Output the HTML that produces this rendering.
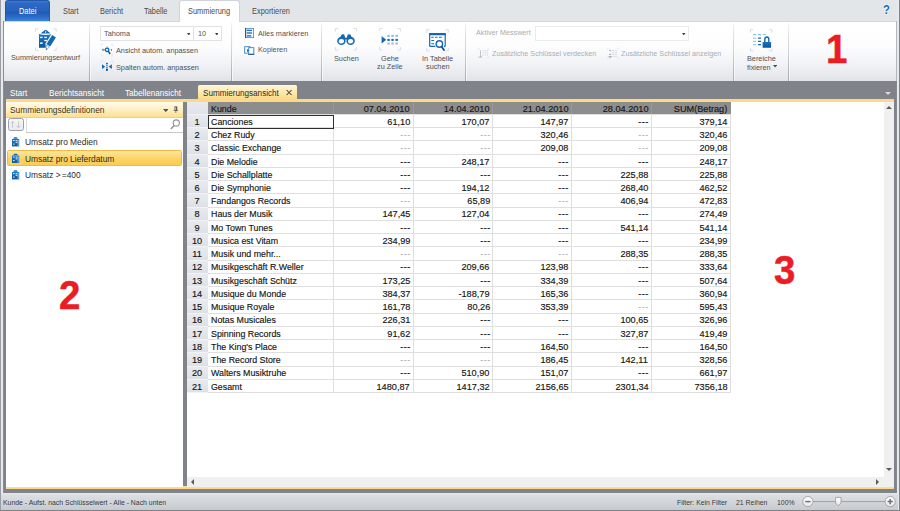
<!DOCTYPE html>
<html><head><meta charset="utf-8"><title>Summierung</title>
<style>
*{box-sizing:border-box;margin:0;padding:0}
html,body{width:900px;height:511px;overflow:hidden}
body{font-family:"Liberation Sans",sans-serif;background:#e3e6e9;position:relative;color:#222}
.a{position:absolute;white-space:nowrap}
.t{position:absolute;white-space:nowrap;line-height:1;transform-origin:0 50%}
.t.r{transform-origin:100% 50%}
#tabstrip{left:0;top:0;width:900px;height:21.5px;background:#e3e6e9}
#ribbon{left:3.5px;top:20.8px;width:893px;height:60.3px;background:linear-gradient(#ffffff 0%,#fdfdfe 42%,#f1f2f5 72%,#e7e9ed 90%,#e1e3e8 100%);border-top:1px solid #d4d7db}
.rt{font-size:8.3px;color:#4a4a4a;transform:scaleX(.893)}
.rl{font-size:8.1px;color:#505050;transform:scaleX(.902)}
.rd{font-size:8.1px;color:#a9adb3;transform:scaleX(.888)}
.sep{width:2px;top:22.6px;height:58.4px;background:linear-gradient(90deg,transparent 50%,rgba(255,255,255,.9) 50%),linear-gradient(#f3f4f5,#dfe1e4 20%,#cfd2d6 50%,#a6a9ae)}
#docstrip{left:3px;top:81.2px;width:893.5px;height:411.8px;background:#80848a}
.dt{font-size:8.9px;color:#fff;transform:scaleX(.915)}
#yl1{left:6px;top:99px;width:888px;height:3px;background:#fbd987}
#yl2{left:6px;top:486.3px;width:888px;height:2.8px;background:linear-gradient(#fde09a,#fbd885)}
#panel{left:6px;top:102px;width:176.7px;height:384.6px;background:#fff}
#phead{left:6px;top:101.7px;width:176.7px;height:15.2px;background:linear-gradient(#fffbea,#fef0c4 50%,#fde08f)}
.pn{font-size:9px;color:#2b2b2b;transform:scaleX(.93)}
#grid{left:186.8px;top:102px;width:707.2px;height:384.6px;background:#fff}
.gc{font-size:9.3px;color:#141414;transform:scaleX(.95);-webkit-text-stroke:0.15px #141414}
.gn{font-size:9.3px;color:#141414;transform:scaleX(.985);-webkit-text-stroke:0.15px #141414}
.hl{height:1px;background:#dfdfdf}
.vl{width:1px;background:#dfdfdf}
#status{left:1.2px;top:493px;width:897.3px;height:16.6px;background:linear-gradient(#e6e8eb 0%,#dcdfe2 14%,#d2d5d9 55%,#c6c9ce 100%)}
.st{font-size:7.7px;color:#3a3a3a;transform:scaleX(.896)}
</style></head><body>

<div class="a" id="tabstrip"></div>
<div class="a" id="ribbon"></div>
<div class="a" id="docstrip"></div>
<div class="a" style="left:0;top:0;width:1px;height:511px;background:#9a9da1"></div>
<div class="a" style="left:1px;top:0;width:2px;height:511px;background:#e7e9ec"></div>
<div class="a" style="left:2.8px;top:21px;width:1px;height:472px;background:#8a8e93"></div>
<div class="a" style="left:896px;top:21px;width:1px;height:60.2px;background:#b4b7bc"></div>
<div class="a" style="left:896px;top:81.2px;width:1px;height:411.8px;background:#85898e"></div>
<div class="a" style="left:897px;top:0;width:1.5px;height:511px;background:#e7e9ec"></div>
<div class="a" style="left:898.5px;top:0;width:1.5px;height:511px;background:#7f8388"></div>
<div class="a" style="left:0;top:509.6px;width:900px;height:1.4px;background:#7f8388"></div>
<div class="a" style="left:5px;top:0;width:45px;height:21px;border-radius:3px 3px 0 0;background:linear-gradient(#3b7ad2 0%,#2c69c5 12%,#2662be 48%,#2059b3 56%,#2b6dc9 80%,#3c86dc 100%);border:1px solid #2257ab;border-bottom:none"></div>
<div class="t rt" style="left:19.40px;top:6.97px;color:#fff">Datei</div>
<div class="t rt" style="left:63.10px;top:7.07px;">Start</div>
<div class="t rt" style="left:99.70px;top:7.07px;">Bericht</div>
<div class="t rt" style="left:143.80px;top:7.07px;">Tabelle</div>
<div class="a" style="left:179px;top:0px;width:61px;height:22.2px;background:#fff;border:1px solid #d0d3d7;border-bottom:none;border-radius:3px 3px 0 0"></div>
<div class="t rt" style="left:188.20px;top:7.17px;">Summierung</div>
<div class="t rt" style="left:251.60px;top:7.17px;">Exportieren</div>
<div class="t" style="left:883px;top:3.4px;font-size:13px;font-weight:bold;color:#166ab2;transform:scaleX(.86);text-shadow:0 0 1.5px #fff,0 0 2px #fff">?</div>
<div class="a sep" style="left:88.8px"></div>
<div class="a sep" style="left:231.4px"></div>
<div class="a sep" style="left:321.0px"></div>
<div class="a sep" style="left:465.2px"></div>
<div class="a sep" style="left:732.8px"></div>
<div class="a sep" style="left:788.4px"></div>
<div class="t rl" style="left:10.50px;top:54.24px;">Summierungsentwurf</div>
<div class="a" style="left:99.5px;top:26px;width:94px;height:14.5px;background:#fff;border:1px solid #e0e2e6"></div>
<div class="a" style="left:193.5px;top:26px;width:28.3px;height:14.5px;background:#fff;border:1px solid #e0e2e6;border-left:none"></div>
<div class="t rl" style="left:103.80px;top:30.14px;">Tahoma</div>
<div class="t rl" style="left:198.30px;top:30.14px;">10</div>
<svg class="a" style="left:186.7px;top:32.7px" width="3.5" height="2.4" viewBox="0 0 3.5 2.4"><path d="M0 0h3.5l-1.75 2.4z" fill="#3a3a3a"/></svg>
<svg class="a" style="left:214.5px;top:32.7px" width="3.5" height="2.4" viewBox="0 0 3.5 2.4"><path d="M0 0h3.5l-1.75 2.4z" fill="#3a3a3a"/></svg>
<div class="t rl" style="left:115.60px;top:46.84px;">Ansicht autom. anpassen</div>
<div class="t rl" style="left:115.60px;top:63.54px;">Spalten autom. anpassen</div>
<div class="t rl" style="left:258.00px;top:29.64px;">Alles markieren</div>
<div class="t rl" style="left:258.00px;top:46.44px;">Kopieren</div>
<div class="t rl" style="left:333.80px;top:54.64px;">Suchen</div>
<div class="t rl" style="left:381.40px;top:54.64px;">Gehe</div>
<div class="t rl" style="left:377.30px;top:62.74px;">zu Zeile</div>
<div class="t rl" style="left:421.80px;top:55.14px;">In Tabelle</div>
<div class="t rl" style="left:425.70px;top:63.34px;">suchen</div>
<div class="t rd" style="left:476.00px;top:29.44px;">Aktiver Messwert</div>
<div class="a" style="left:535.4px;top:26px;width:154px;height:14.5px;background:#fff;border:1px solid #e8eaed"></div>
<svg class="a" style="left:682.1px;top:32.6px" width="3.5" height="2.4" viewBox="0 0 3.5 2.4"><path d="M0 0h3.5l-1.75 2.4z" fill="#3a3a3a"/></svg>
<div class="t rd" style="left:491.80px;top:50.04px;">Zusätzliche Schlüssel verdecken</div>
<div class="t rd" style="left:621.20px;top:50.04px;">Zusätzliche Schlüssel anzeigen</div>
<div class="t rl" style="left:746.90px;top:55.04px;">Bereiche</div>
<div class="t rl" style="left:746.60px;top:63.64px;">fixieren</div>
<svg class="a" style="left:772.5px;top:65.4px" width="4.2" height="2.4" viewBox="0 0 4.2 2.4"><path d="M0 0h4.2l-2.1 2.4z" fill="#4a4a4a"/></svg>
<div class="t dt" style="left:10.30px;top:88.87px;">Start</div>
<div class="t dt" style="left:48.90px;top:88.87px;">Berichtsansicht</div>
<div class="t dt" style="left:125.20px;top:88.87px;">Tabellenansicht</div>
<div class="a" style="left:198.2px;top:85.3px;width:99px;height:14.2px;background:linear-gradient(#fff7dc,#fde7a8 60%,#fbd987);border-radius:1.5px 1.5px 0 0"></div>
<div class="t dt" style="left:203.30px;top:88.87px;color:#2a2a2a">Summierungsansicht</div>
<div class="a" style="left:885.2px;top:92.3px;width:0;height:0;border-left:3px solid transparent;border-right:3px solid transparent;border-top:3.2px solid #d9dbde"></div>
<div class="a" id="yl1"></div><div class="a" id="yl2"></div>
<div class="a" id="panel"></div><div class="a" id="phead"></div>
<div class="a" style="left:6px;top:116.8px;width:176.7px;height:0.8px;background:#cfcfcf"></div>
<div class="t pn" style="left:9.60px;top:106.38px;color:#3a3322">Summierungsdefinitionen</div>
<svg class="a" style="left:162.6px;top:109px" width="5.6" height="3.1" viewBox="0 0 5.6 3.1"><path d="M0 0h5.6l-2.8 3.1z" fill="#55554f"/></svg>
<div class="a" style="left:7.7px;top:118.4px;width:16.3px;height:12.2px;border:1px solid #9c9fa3;border-radius:2.5px;background:linear-gradient(#f6f6f6,#e9eaeb)"></div>
<div class="a" style="left:25.6px;top:131.6px;width:157.1px;height:1px;background:#c6c8ca"></div>
<div class="a" style="left:25.6px;top:117.6px;width:1px;height:14.5px;background:#dcdddf"></div>
<div class="a" style="left:7.3px;top:150px;width:175px;height:16.4px;background:linear-gradient(#fde59c,#fcd465 55%,#fbcb52);border:1px solid #ecba45;border-radius:1.5px"></div>
<div class="t pn" style="left:25.10px;top:138.48px;">Umsatz pro Medien</div>
<div class="t pn" style="left:25.10px;top:154.78px;">Umsatz pro Lieferdatum</div>
<div class="t pn" style="left:25.10px;top:171.38px;">Umsatz &gt;<span style="margin-left:1.3px">=</span>400</div>
<div class="a" id="grid"></div>
<div class="a" style="left:186.8px;top:102px;width:21.6px;height:12.5px;background:linear-gradient(#e8eaee,#dfe2e7)"></div>
<div class="a" style="left:186.8px;top:114.5px;width:21.6px;height:278.04px;background:repeating-linear-gradient(#e8eaee 0px,#e3e6ea 6px,#dcdfe5 13.24px)"></div>
<div class="a" style="left:208.0px;top:102px;width:522.7px;height:12.5px;background:#8d8d8d"></div>
<div class="a" style="left:333.2px;top:102px;width:1px;height:12.5px;background:#999999"></div>
<div class="a" style="left:412.5px;top:102px;width:1px;height:12.5px;background:#999999"></div>
<div class="a" style="left:492.3px;top:102px;width:1px;height:12.5px;background:#999999"></div>
<div class="a" style="left:570.7px;top:102px;width:1px;height:12.5px;background:#999999"></div>
<div class="a" style="left:650.6px;top:102px;width:1px;height:12.5px;background:#999999"></div>
<div class="t gc" style="left:211.20px;top:104.83px;color:#181818">Kunde</div>
<div class="t gn r" style="right:490.00px;top:104.83px;color:#181818">07.04.2010</div>
<div class="t gn r" style="right:410.20px;top:104.83px;color:#181818">14.04.2010</div>
<div class="t gn r" style="right:331.80px;top:104.83px;color:#181818">21.04.2010</div>
<div class="t gn r" style="right:251.90px;top:104.83px;color:#181818">28.04.2010</div>
<div class="t gn r" style="right:172.30px;top:104.83px;color:#181818">SUM(Betrag)</div>
<div class="a hl" style="left:208.4px;top:114.00px;width:522.3px"></div>
<div class="a hl" style="left:186.8px;top:114.00px;width:21.6px;background:#f1f2f4"></div>
<div class="a hl" style="left:208.4px;top:127.24px;width:522.3px"></div>
<div class="a hl" style="left:186.8px;top:127.24px;width:21.6px;background:#f1f2f4"></div>
<div class="a hl" style="left:208.4px;top:140.48px;width:522.3px"></div>
<div class="a hl" style="left:186.8px;top:140.48px;width:21.6px;background:#f1f2f4"></div>
<div class="a hl" style="left:208.4px;top:153.72px;width:522.3px"></div>
<div class="a hl" style="left:186.8px;top:153.72px;width:21.6px;background:#f1f2f4"></div>
<div class="a hl" style="left:208.4px;top:166.96px;width:522.3px"></div>
<div class="a hl" style="left:186.8px;top:166.96px;width:21.6px;background:#f1f2f4"></div>
<div class="a hl" style="left:208.4px;top:180.20px;width:522.3px"></div>
<div class="a hl" style="left:186.8px;top:180.20px;width:21.6px;background:#f1f2f4"></div>
<div class="a hl" style="left:208.4px;top:193.44px;width:522.3px"></div>
<div class="a hl" style="left:186.8px;top:193.44px;width:21.6px;background:#f1f2f4"></div>
<div class="a hl" style="left:208.4px;top:206.68px;width:522.3px"></div>
<div class="a hl" style="left:186.8px;top:206.68px;width:21.6px;background:#f1f2f4"></div>
<div class="a hl" style="left:208.4px;top:219.92px;width:522.3px"></div>
<div class="a hl" style="left:186.8px;top:219.92px;width:21.6px;background:#f1f2f4"></div>
<div class="a hl" style="left:208.4px;top:233.16px;width:522.3px"></div>
<div class="a hl" style="left:186.8px;top:233.16px;width:21.6px;background:#f1f2f4"></div>
<div class="a hl" style="left:208.4px;top:246.40px;width:522.3px"></div>
<div class="a hl" style="left:186.8px;top:246.40px;width:21.6px;background:#f1f2f4"></div>
<div class="a hl" style="left:208.4px;top:259.64px;width:522.3px"></div>
<div class="a hl" style="left:186.8px;top:259.64px;width:21.6px;background:#f1f2f4"></div>
<div class="a hl" style="left:208.4px;top:272.88px;width:522.3px"></div>
<div class="a hl" style="left:186.8px;top:272.88px;width:21.6px;background:#f1f2f4"></div>
<div class="a hl" style="left:208.4px;top:286.12px;width:522.3px"></div>
<div class="a hl" style="left:186.8px;top:286.12px;width:21.6px;background:#f1f2f4"></div>
<div class="a hl" style="left:208.4px;top:299.36px;width:522.3px"></div>
<div class="a hl" style="left:186.8px;top:299.36px;width:21.6px;background:#f1f2f4"></div>
<div class="a hl" style="left:208.4px;top:312.60px;width:522.3px"></div>
<div class="a hl" style="left:186.8px;top:312.60px;width:21.6px;background:#f1f2f4"></div>
<div class="a hl" style="left:208.4px;top:325.84px;width:522.3px"></div>
<div class="a hl" style="left:186.8px;top:325.84px;width:21.6px;background:#f1f2f4"></div>
<div class="a hl" style="left:208.4px;top:339.08px;width:522.3px"></div>
<div class="a hl" style="left:186.8px;top:339.08px;width:21.6px;background:#f1f2f4"></div>
<div class="a hl" style="left:208.4px;top:352.32px;width:522.3px"></div>
<div class="a hl" style="left:186.8px;top:352.32px;width:21.6px;background:#f1f2f4"></div>
<div class="a hl" style="left:208.4px;top:365.56px;width:522.3px"></div>
<div class="a hl" style="left:186.8px;top:365.56px;width:21.6px;background:#f1f2f4"></div>
<div class="a hl" style="left:208.4px;top:378.80px;width:522.3px"></div>
<div class="a hl" style="left:186.8px;top:378.80px;width:21.6px;background:#f1f2f4"></div>
<div class="a hl" style="left:208.4px;top:392.04px;width:522.3px"></div>
<div class="a hl" style="left:186.8px;top:392.04px;width:21.6px;background:#f1f2f4"></div>
<div class="a vl" style="left:333.2px;top:114.5px;height:278.04px"></div>
<div class="a vl" style="left:412.5px;top:114.5px;height:278.04px"></div>
<div class="a vl" style="left:492.3px;top:114.5px;height:278.04px"></div>
<div class="a vl" style="left:570.7px;top:114.5px;height:278.04px"></div>
<div class="a vl" style="left:650.6px;top:114.5px;height:278.04px"></div>
<div class="a vl" style="left:730.2px;top:114.5px;height:278.04px"></div>
<div class="t gn" style="left:187.4px;width:20px;text-align:center;transform-origin:50% 50%;top:117.78px">1</div>
<div class="t gc" style="left:211.00px;top:117.78px;">Canciones</div>
<div class="t gn r" style="right:490.00px;top:117.78px;">61,10</div>
<div class="t gn r" style="right:410.20px;top:117.78px;">170,07</div>
<div class="t gn r" style="right:331.80px;top:117.78px;">147,97</div>
<div class="t gn r" style="right:251.90px;top:117.78px;letter-spacing:.5px;margin-right:-.5px;">---</div>
<div class="t gn r" style="right:172.30px;top:117.78px;">379,14</div>
<div class="t gn" style="left:187.4px;width:20px;text-align:center;transform-origin:50% 50%;top:131.02px">2</div>
<div class="t gc" style="left:211.00px;top:131.02px;">Chez Rudy</div>
<div class="t gn r" style="right:490.00px;top:131.02px;letter-spacing:.5px;margin-right:-.5px;color:#a4a4a4;-webkit-text-stroke:0">---</div>
<div class="t gn r" style="right:410.20px;top:131.02px;letter-spacing:.5px;margin-right:-.5px;color:#a4a4a4;-webkit-text-stroke:0">---</div>
<div class="t gn r" style="right:331.80px;top:131.02px;">320,46</div>
<div class="t gn r" style="right:251.90px;top:131.02px;letter-spacing:.5px;margin-right:-.5px;color:#a4a4a4;-webkit-text-stroke:0">---</div>
<div class="t gn r" style="right:172.30px;top:131.02px;">320,46</div>
<div class="t gn" style="left:187.4px;width:20px;text-align:center;transform-origin:50% 50%;top:144.26px">3</div>
<div class="t gc" style="left:211.00px;top:144.26px;">Classic Exchange</div>
<div class="t gn r" style="right:490.00px;top:144.26px;letter-spacing:.5px;margin-right:-.5px;color:#a4a4a4;-webkit-text-stroke:0">---</div>
<div class="t gn r" style="right:410.20px;top:144.26px;letter-spacing:.5px;margin-right:-.5px;color:#a4a4a4;-webkit-text-stroke:0">---</div>
<div class="t gn r" style="right:331.80px;top:144.26px;">209,08</div>
<div class="t gn r" style="right:251.90px;top:144.26px;letter-spacing:.5px;margin-right:-.5px;color:#a4a4a4;-webkit-text-stroke:0">---</div>
<div class="t gn r" style="right:172.30px;top:144.26px;">209,08</div>
<div class="t gn" style="left:187.4px;width:20px;text-align:center;transform-origin:50% 50%;top:157.50px">4</div>
<div class="t gc" style="left:211.00px;top:157.50px;">Die Melodie</div>
<div class="t gn r" style="right:490.00px;top:157.50px;letter-spacing:.5px;margin-right:-.5px;">---</div>
<div class="t gn r" style="right:410.20px;top:157.50px;">248,17</div>
<div class="t gn r" style="right:331.80px;top:157.50px;letter-spacing:.5px;margin-right:-.5px;">---</div>
<div class="t gn r" style="right:251.90px;top:157.50px;letter-spacing:.5px;margin-right:-.5px;">---</div>
<div class="t gn r" style="right:172.30px;top:157.50px;">248,17</div>
<div class="t gn" style="left:187.4px;width:20px;text-align:center;transform-origin:50% 50%;top:170.74px">5</div>
<div class="t gc" style="left:211.00px;top:170.74px;">Die Schallplatte</div>
<div class="t gn r" style="right:490.00px;top:170.74px;letter-spacing:.5px;margin-right:-.5px;">---</div>
<div class="t gn r" style="right:410.20px;top:170.74px;letter-spacing:.5px;margin-right:-.5px;">---</div>
<div class="t gn r" style="right:331.80px;top:170.74px;letter-spacing:.5px;margin-right:-.5px;">---</div>
<div class="t gn r" style="right:251.90px;top:170.74px;">225,88</div>
<div class="t gn r" style="right:172.30px;top:170.74px;">225,88</div>
<div class="t gn" style="left:187.4px;width:20px;text-align:center;transform-origin:50% 50%;top:183.98px">6</div>
<div class="t gc" style="left:211.00px;top:183.98px;">Die Symphonie</div>
<div class="t gn r" style="right:490.00px;top:183.98px;letter-spacing:.5px;margin-right:-.5px;">---</div>
<div class="t gn r" style="right:410.20px;top:183.98px;">194,12</div>
<div class="t gn r" style="right:331.80px;top:183.98px;letter-spacing:.5px;margin-right:-.5px;">---</div>
<div class="t gn r" style="right:251.90px;top:183.98px;">268,40</div>
<div class="t gn r" style="right:172.30px;top:183.98px;">462,52</div>
<div class="t gn" style="left:187.4px;width:20px;text-align:center;transform-origin:50% 50%;top:197.22px">7</div>
<div class="t gc" style="left:211.00px;top:197.22px;">Fandangos Records</div>
<div class="t gn r" style="right:490.00px;top:197.22px;letter-spacing:.5px;margin-right:-.5px;color:#a4a4a4;-webkit-text-stroke:0">---</div>
<div class="t gn r" style="right:410.20px;top:197.22px;">65,89</div>
<div class="t gn r" style="right:331.80px;top:197.22px;letter-spacing:.5px;margin-right:-.5px;color:#a4a4a4;-webkit-text-stroke:0">---</div>
<div class="t gn r" style="right:251.90px;top:197.22px;">406,94</div>
<div class="t gn r" style="right:172.30px;top:197.22px;">472,83</div>
<div class="t gn" style="left:187.4px;width:20px;text-align:center;transform-origin:50% 50%;top:210.46px">8</div>
<div class="t gc" style="left:211.00px;top:210.46px;">Haus der Musik</div>
<div class="t gn r" style="right:490.00px;top:210.46px;">147,45</div>
<div class="t gn r" style="right:410.20px;top:210.46px;">127,04</div>
<div class="t gn r" style="right:331.80px;top:210.46px;letter-spacing:.5px;margin-right:-.5px;">---</div>
<div class="t gn r" style="right:251.90px;top:210.46px;letter-spacing:.5px;margin-right:-.5px;">---</div>
<div class="t gn r" style="right:172.30px;top:210.46px;">274,49</div>
<div class="t gn" style="left:187.4px;width:20px;text-align:center;transform-origin:50% 50%;top:223.70px">9</div>
<div class="t gc" style="left:211.00px;top:223.70px;">Mo Town Tunes</div>
<div class="t gn r" style="right:490.00px;top:223.70px;letter-spacing:.5px;margin-right:-.5px;">---</div>
<div class="t gn r" style="right:410.20px;top:223.70px;letter-spacing:.5px;margin-right:-.5px;">---</div>
<div class="t gn r" style="right:331.80px;top:223.70px;letter-spacing:.5px;margin-right:-.5px;">---</div>
<div class="t gn r" style="right:251.90px;top:223.70px;">541,14</div>
<div class="t gn r" style="right:172.30px;top:223.70px;">541,14</div>
<div class="t gn" style="left:187.4px;width:20px;text-align:center;transform-origin:50% 50%;top:236.94px">10</div>
<div class="t gc" style="left:211.00px;top:236.94px;">Musica est Vitam</div>
<div class="t gn r" style="right:490.00px;top:236.94px;">234,99</div>
<div class="t gn r" style="right:410.20px;top:236.94px;letter-spacing:.5px;margin-right:-.5px;">---</div>
<div class="t gn r" style="right:331.80px;top:236.94px;letter-spacing:.5px;margin-right:-.5px;">---</div>
<div class="t gn r" style="right:251.90px;top:236.94px;letter-spacing:.5px;margin-right:-.5px;">---</div>
<div class="t gn r" style="right:172.30px;top:236.94px;">234,99</div>
<div class="t gn" style="left:187.4px;width:20px;text-align:center;transform-origin:50% 50%;top:250.18px">11</div>
<div class="t gc" style="left:211.00px;top:250.18px;">Musik und mehr...</div>
<div class="t gn r" style="right:490.00px;top:250.18px;letter-spacing:.5px;margin-right:-.5px;color:#a4a4a4;-webkit-text-stroke:0">---</div>
<div class="t gn r" style="right:410.20px;top:250.18px;letter-spacing:.5px;margin-right:-.5px;color:#a4a4a4;-webkit-text-stroke:0">---</div>
<div class="t gn r" style="right:331.80px;top:250.18px;letter-spacing:.5px;margin-right:-.5px;color:#a4a4a4;-webkit-text-stroke:0">---</div>
<div class="t gn r" style="right:251.90px;top:250.18px;">288,35</div>
<div class="t gn r" style="right:172.30px;top:250.18px;">288,35</div>
<div class="t gn" style="left:187.4px;width:20px;text-align:center;transform-origin:50% 50%;top:263.42px">12</div>
<div class="t gc" style="left:211.00px;top:263.42px;">Musikgeschäft R.Weller</div>
<div class="t gn r" style="right:490.00px;top:263.42px;letter-spacing:.5px;margin-right:-.5px;">---</div>
<div class="t gn r" style="right:410.20px;top:263.42px;">209,66</div>
<div class="t gn r" style="right:331.80px;top:263.42px;">123,98</div>
<div class="t gn r" style="right:251.90px;top:263.42px;letter-spacing:.5px;margin-right:-.5px;">---</div>
<div class="t gn r" style="right:172.30px;top:263.42px;">333,64</div>
<div class="t gn" style="left:187.4px;width:20px;text-align:center;transform-origin:50% 50%;top:276.66px">13</div>
<div class="t gc" style="left:211.00px;top:276.66px;">Musikgeschäft Schütz</div>
<div class="t gn r" style="right:490.00px;top:276.66px;">173,25</div>
<div class="t gn r" style="right:410.20px;top:276.66px;letter-spacing:.5px;margin-right:-.5px;">---</div>
<div class="t gn r" style="right:331.80px;top:276.66px;">334,39</div>
<div class="t gn r" style="right:251.90px;top:276.66px;letter-spacing:.5px;margin-right:-.5px;">---</div>
<div class="t gn r" style="right:172.30px;top:276.66px;">507,64</div>
<div class="t gn" style="left:187.4px;width:20px;text-align:center;transform-origin:50% 50%;top:289.90px">14</div>
<div class="t gc" style="left:211.00px;top:289.90px;">Musique du Monde</div>
<div class="t gn r" style="right:490.00px;top:289.90px;">384,37</div>
<div class="t gn r" style="right:410.20px;top:289.90px;">-188,79</div>
<div class="t gn r" style="right:331.80px;top:289.90px;">165,36</div>
<div class="t gn r" style="right:251.90px;top:289.90px;letter-spacing:.5px;margin-right:-.5px;">---</div>
<div class="t gn r" style="right:172.30px;top:289.90px;">360,94</div>
<div class="t gn" style="left:187.4px;width:20px;text-align:center;transform-origin:50% 50%;top:303.14px">15</div>
<div class="t gc" style="left:211.00px;top:303.14px;">Musique Royale</div>
<div class="t gn r" style="right:490.00px;top:303.14px;">161,78</div>
<div class="t gn r" style="right:410.20px;top:303.14px;">80,26</div>
<div class="t gn r" style="right:331.80px;top:303.14px;">353,39</div>
<div class="t gn r" style="right:251.90px;top:303.14px;letter-spacing:.5px;margin-right:-.5px;color:#a4a4a4;-webkit-text-stroke:0">---</div>
<div class="t gn r" style="right:172.30px;top:303.14px;">595,43</div>
<div class="t gn" style="left:187.4px;width:20px;text-align:center;transform-origin:50% 50%;top:316.38px">16</div>
<div class="t gc" style="left:211.00px;top:316.38px;">Notas Musicales</div>
<div class="t gn r" style="right:490.00px;top:316.38px;">226,31</div>
<div class="t gn r" style="right:410.20px;top:316.38px;letter-spacing:.5px;margin-right:-.5px;">---</div>
<div class="t gn r" style="right:331.80px;top:316.38px;letter-spacing:.5px;margin-right:-.5px;">---</div>
<div class="t gn r" style="right:251.90px;top:316.38px;">100,65</div>
<div class="t gn r" style="right:172.30px;top:316.38px;">326,96</div>
<div class="t gn" style="left:187.4px;width:20px;text-align:center;transform-origin:50% 50%;top:329.62px">17</div>
<div class="t gc" style="left:211.00px;top:329.62px;">Spinning Records</div>
<div class="t gn r" style="right:490.00px;top:329.62px;">91,62</div>
<div class="t gn r" style="right:410.20px;top:329.62px;letter-spacing:.5px;margin-right:-.5px;">---</div>
<div class="t gn r" style="right:331.80px;top:329.62px;letter-spacing:.5px;margin-right:-.5px;">---</div>
<div class="t gn r" style="right:251.90px;top:329.62px;">327,87</div>
<div class="t gn r" style="right:172.30px;top:329.62px;">419,49</div>
<div class="t gn" style="left:187.4px;width:20px;text-align:center;transform-origin:50% 50%;top:342.86px">18</div>
<div class="t gc" style="left:211.00px;top:342.86px;">The King's Place</div>
<div class="t gn r" style="right:490.00px;top:342.86px;letter-spacing:.5px;margin-right:-.5px;">---</div>
<div class="t gn r" style="right:410.20px;top:342.86px;letter-spacing:.5px;margin-right:-.5px;">---</div>
<div class="t gn r" style="right:331.80px;top:342.86px;">164,50</div>
<div class="t gn r" style="right:251.90px;top:342.86px;letter-spacing:.5px;margin-right:-.5px;">---</div>
<div class="t gn r" style="right:172.30px;top:342.86px;">164,50</div>
<div class="t gn" style="left:187.4px;width:20px;text-align:center;transform-origin:50% 50%;top:356.10px">19</div>
<div class="t gc" style="left:211.00px;top:356.10px;">The Record Store</div>
<div class="t gn r" style="right:490.00px;top:356.10px;letter-spacing:.5px;margin-right:-.5px;color:#a4a4a4;-webkit-text-stroke:0">---</div>
<div class="t gn r" style="right:410.20px;top:356.10px;letter-spacing:.5px;margin-right:-.5px;color:#a4a4a4;-webkit-text-stroke:0">---</div>
<div class="t gn r" style="right:331.80px;top:356.10px;">186,45</div>
<div class="t gn r" style="right:251.90px;top:356.10px;">142,11</div>
<div class="t gn r" style="right:172.30px;top:356.10px;">328,56</div>
<div class="t gn" style="left:187.4px;width:20px;text-align:center;transform-origin:50% 50%;top:369.34px">20</div>
<div class="t gc" style="left:211.00px;top:369.34px;">Walters Musiktruhe</div>
<div class="t gn r" style="right:490.00px;top:369.34px;letter-spacing:.5px;margin-right:-.5px;">---</div>
<div class="t gn r" style="right:410.20px;top:369.34px;">510,90</div>
<div class="t gn r" style="right:331.80px;top:369.34px;">151,07</div>
<div class="t gn r" style="right:251.90px;top:369.34px;letter-spacing:.5px;margin-right:-.5px;">---</div>
<div class="t gn r" style="right:172.30px;top:369.34px;">661,97</div>
<div class="t gn" style="left:187.4px;width:20px;text-align:center;transform-origin:50% 50%;top:382.58px">21</div>
<div class="t gc" style="left:211.00px;top:382.58px;">Gesamt</div>
<div class="t gn r" style="right:490.00px;top:382.58px;">1480,87</div>
<div class="t gn r" style="right:410.20px;top:382.58px;">1417,32</div>
<div class="t gn r" style="right:331.80px;top:382.58px;">2156,65</div>
<div class="t gn r" style="right:251.90px;top:382.58px;">2301,34</div>
<div class="t gn r" style="right:172.30px;top:382.58px;">7356,18</div>
<div class="a" style="left:207.8px;top:114.8px;width:126.3px;height:13.84px;border:1px solid #2e2e2e"></div>
<div class="a" style="left:884.4px;top:102px;width:9.6px;height:375px;background:#f0f0f0"></div>
<div class="a" style="left:186.8px;top:477px;width:707.2px;height:9.5px;background:#f0f0f0"></div>
<div class="a" style="left:885.9px;top:106.2px;width:0;height:0;border-left:3px solid transparent;border-right:3px solid transparent;border-bottom:3.2px solid #5a5a5a"></div>
<div class="a" style="left:885.9px;top:468.4px;width:0;height:0;border-left:3px solid transparent;border-right:3px solid transparent;border-top:3.2px solid #5a5a5a"></div>
<div class="a" style="left:191.3px;top:478.8px;width:0;height:0;border-top:3px solid transparent;border-bottom:3px solid transparent;border-right:3.2px solid #5a5a5a"></div>
<div class="a" style="left:876.2px;top:478.6px;width:0;height:0;border-top:3px solid transparent;border-bottom:3px solid transparent;border-left:3.2px solid #5a5a5a"></div>
<div class="a" id="status"></div>
<div class="t st" style="left:3.20px;top:499.28px;">Kunde - Aufst. nach Schlüsselwert - Alle - Nach unten</div>
<div class="t st" style="left:676.60px;top:499.28px;">Filter: Kein Filter</div>
<div class="t st" style="left:736.10px;top:499.28px;">21 Reihen</div>
<div class="t st" style="left:777.00px;top:499.28px;">100%</div>
<svg class="a" style="left:795px;top:493px" width="104" height="17" viewBox="795 493 104 17"><defs><linearGradient id="zb" x1="0" y1="0" x2="0" y2="1"><stop offset="0" stop-color="#ffffff"/><stop offset="1" stop-color="#e4e6e9"/></linearGradient></defs><path d="M813 501.6H885" stroke="#9da1a6" stroke-width="1"/><circle cx="807.9" cy="501.6" r="5.1" fill="url(#zb)" stroke="#a3a7ac" stroke-width="1"/><circle cx="890.2" cy="501.6" r="5.1" fill="url(#zb)" stroke="#a3a7ac" stroke-width="1"/><path d="M805.3 501.6h5.2" stroke="#6e7175" stroke-width="1.5"/><path d="M887.6 501.6h5.2M890.2 499v5.2" stroke="#6e7175" stroke-width="1.5"/><path d="M835.6 497.4h5.4v5.6l-2.7 2.9l-2.7-2.9z" fill="url(#zb)" stroke="#9da1a6" stroke-width="0.9" stroke-linejoin="round"/></svg>
<div class="t" style="left:826.3px;top:28.5px;font-size:40px;font-weight:bold;color:#ec1c24;-webkit-text-stroke:0.5px #ec1c24;transform:scaleX(.96)">1</div>
<div class="t" style="left:58.8px;top:274.7px;font-size:40px;font-weight:bold;color:#ec1c24;-webkit-text-stroke:0.5px #ec1c24;transform:scaleX(.96)">2</div>
<div class="t" style="left:773.6px;top:249.7px;font-size:40px;font-weight:bold;color:#ec1c24;-webkit-text-stroke:0.5px #ec1c24;transform:scaleX(.96)">3</div>
<svg class="a" style="left:0;top:0" width="900" height="511" viewBox="0 0 900 511">
<defs><linearGradient id="gb" x1="0" y1="0" x2="0" y2="1"><stop offset="0" stop-color="#1b78c4"/><stop offset="1" stop-color="#0b5596"/></linearGradient></defs>
<path d="M41.2 33.5q0.3-1.6 2-1.9q0.4-1.5 2.4-1.5q2 0 2.4 1.5q1.7 0.3 2 1.9z" fill="#1368b3"/>
<circle cx="45.6" cy="32" r="0.7" fill="#fff"/>
<path d="M39 34.1q6.5 1.7 13.1 0v13.7h-13.1z" fill="url(#gb)"/>
<rect x="40.2" y="36.7" width="2.3" height="1.4" fill="#fff"/>
<rect x="44.3" y="36.7" width="2.6" height="1.4" fill="#fff"/>
<rect x="44.3" y="39.8" width="2.6" height="1.4" fill="#fff"/>
<rect x="40.2" y="42.4" width="2.4" height="1.6" fill="#fff"/>
<path d="M51.7 33.4L57.2 37L57.2 52L45.9 52L45.5 43.5z" fill="#fff"/>
<path d="M52.2 35.1L55.9 37.6L50.1 46.4L46.5 44z" fill="#1368b3"/>
<path d="M46.3 44.9L49.4 47L46.2 49.9z" fill="#fff" stroke="#1368b3" stroke-width="0.5"/>
<path d="M46.25 48.3L47.4 49L46.2 50z" fill="#0b4f8c"/>
<path d="M35.5 31.799999999999997V28.9H38.4M53.300000000000004 28.9H56.2V31.799999999999997M56.2 47.4V50.3H53.300000000000004M38.4 50.3H35.5V47.4" fill="none" stroke="#cfdaeb" stroke-width="0.9"/>
<path d="M101.2 46.400000000000006V44.2H103.4M110.6 44.2H112.8V46.400000000000006M112.8 53.599999999999994V55.8H110.6M103.4 55.8H101.2V53.599999999999994" fill="none" stroke="#dbe3f0" stroke-width="0.7"/>
<circle cx="107.1" cy="49.8" r="1.75" fill="#fff" stroke="#1368b3" stroke-width="1.35"/>
<path d="M108.6 51.6L109.9 53.5" stroke="#0b5596" stroke-width="1.5" stroke-linecap="round"/>
<path d="M103.5 48.5v2.7l-1.7-1.35z" fill="#1368b3"/><rect x="103.8" y="49.2" width="0.8" height="1.2" fill="#1368b3"/>
<rect x="109.6" y="49.3" width="0.6" height="1.1" fill="#7fb3df"/><rect x="111" y="48.9" width="1" height="1.9" rx="0.4" fill="#2a7cc3"/>
<path d="M107.1 47.4v-0.7" stroke="#1368b3" stroke-width="1.1"/>
<path d="M101.2 63.0V60.8H103.4M110.6 60.8H112.8V63.0M112.8 70.0V72.2H110.6M103.4 72.2H101.2V70.0" fill="none" stroke="#dbe3f0" stroke-width="0.7"/>
<path d="M102 64.3l3.2 2.4l-3.2 2.4z" fill="#1368b3"/><path d="M111.9 64.3l-3.2 2.4l3.2 2.4z" fill="#1368b3"/>
<rect x="106" y="62.8" width="1.8" height="1.5" fill="#1368b3"/><rect x="106" y="64.9" width="1.8" height="1.4" fill="#4f97d3"/><rect x="106" y="66.9" width="1.8" height="1.4" fill="#4f97d3"/><rect x="106" y="68.8" width="1.8" height="2" fill="#0a3e70"/>
<rect x="245.5" y="28.4" width="8.1" height="9.2" fill="#fff" stroke="#3f8bcd" stroke-width="0.8"/>
<rect x="245" y="28" width="1.2" height="10" fill="#0f5fa8"/>
<rect x="246.8" y="29.7" width="5.3" height="1.4" fill="#1f72b8"/>
<rect x="246.8" y="32.3" width="5.3" height="1.4" fill="#1f72b8"/>
<rect x="246.8" y="35.2" width="5.3" height="1.4" fill="#1f72b8"/>
<rect x="251" y="35.2" width="1.1" height="1.4" fill="#fff"/>
<rect x="244.7" y="46.7" width="5.3" height="6.4" fill="#fff" stroke="#2f7fc4" stroke-width="0.9"/>
<rect x="248.7" y="47.7" width="5.1" height="6.5" fill="#fff" stroke="#2f7fc4" stroke-width="0.9"/>
<path d="M247 49l2.3 1.5l-2.3 1.5z" fill="#1368b3"/>
<path d="M248.3 54.4h5.9" stroke="#0a3e70" stroke-width="0.8"/>
<path d="M335.4 31.4V28.5H338.29999999999995M353.5 28.5H356.4V31.4M356.4 47.1V50.0H353.5M338.29999999999995 50.0H335.4V47.1" fill="none" stroke="#cfdaeb" stroke-width="0.9"/>
<path d="M341.6 34.4q1.3-0.5 2.6 0l1.1 3.4h1.4l1.1-3.4q1.3-0.5 2.6 0l2.3 5.2h-13.4z" fill="#1368b3"/>
<circle cx="341.4" cy="40.9" r="4.2" fill="#1368b3"/><circle cx="350.6" cy="40.9" r="4.2" fill="#1368b3"/>
<ellipse cx="341.4" cy="41.2" rx="2.6" ry="2.3" fill="#fff"/><ellipse cx="350.6" cy="41.2" rx="2.6" ry="2.3" fill="#fff"/>
<path d="M379.7 31.4V28.5H382.59999999999997M397.5 28.5H400.4V31.4M400.4 47.1V50.0H397.5M382.59999999999997 50.0H379.7V47.1" fill="none" stroke="#cfdaeb" stroke-width="0.9"/>
<path d="M381.6 36l4.6 3.7l-4.6 3.7z" fill="url(#gb)"/>
<rect x="387.3" y="34.8" width="2.5" height="2.1" fill="#8cc0e8"/>
<rect x="391.3" y="34.8" width="2.5" height="2.1" fill="#8cc0e8"/>
<rect x="395.4" y="34.8" width="2.5" height="2.1" fill="#8cc0e8"/>
<rect x="387.3" y="38.9" width="2.5" height="2.0" fill="#0f6cbd"/>
<rect x="391.3" y="38.9" width="2.5" height="2.0" fill="#0f6cbd"/>
<rect x="395.4" y="38.9" width="2.5" height="2.0" fill="#0f6cbd"/>
<rect x="387.3" y="42.5" width="2.5" height="2.1" fill="#b3bcc5"/>
<rect x="391.3" y="42.5" width="2.5" height="2.1" fill="#b3bcc5"/>
<rect x="395.4" y="42.5" width="2.5" height="2.1" fill="#b3bcc5"/>
<path d="M426.7 32.7V29.8H429.59999999999997M445.40000000000003 29.8H448.3V32.7M448.3 47.9V50.8H445.40000000000003M429.59999999999997 50.8H426.7V47.9" fill="none" stroke="#cfdaeb" stroke-width="0.9"/>
<rect x="429.7" y="33.7" width="15.5" height="12.6" rx="0.6" fill="#fff" stroke="#1368b3" stroke-width="1.2"/>
<rect x="429.1" y="33.1" width="16.7" height="2.2" rx="0.6" fill="#1368b3"/>
<rect x="431.2" y="36.7" width="2.6" height="1.1" rx="0.5" fill="#1368b3"/>
<rect x="435" y="36.7" width="2.6" height="1.1" rx="0.5" fill="#1368b3"/>
<rect x="438.9" y="36.7" width="3" height="1.1" rx="0.5" fill="#1368b3"/>
<rect x="431.2" y="40" width="3" height="1.1" rx="0.5" fill="#1368b3"/>
<rect x="431.2" y="43.2" width="3" height="1.1" rx="0.5" fill="#1368b3"/>
<circle cx="439.4" cy="44" r="4.9" fill="#fff"/><path d="M441.8 46.8L444.3 50.3" stroke="#fff" stroke-width="3.6" stroke-linecap="round"/>
<circle cx="439.4" cy="44" r="3.2" fill="#fff" stroke="#1368b3" stroke-width="1.4"/>
<path d="M441.7 46.8L444 50" stroke="#0b5596" stroke-width="1.9" stroke-linecap="round"/>
<path d="M478.2 50.0V48.2H480.0M486.9 48.2H488.7V50.0M488.7 56.0V57.8H486.9M480.0 57.8H478.2V56.0" fill="none" stroke="#e0e3e7" stroke-width="0.6"/>
<path d="M480.5 50.4v5.4" stroke="#b9bcc1" stroke-width="0.9"/><path d="M478.6 57.6h3.9l-1.95-2z" fill="#b3b6bb"/>
<path d="M482.6 50.6h1.7M485 50.6h1.5M487 50.6h1.2" stroke="#d3d6da" stroke-width="0.9"/>
<path d="M482.6 52.8h1.7M485 52.8h1.5M487 52.8h1.2" stroke="#d3d6da" stroke-width="0.9"/>
<path d="M482.6 55h1.7M485 55h1.5M487 55h1.2" stroke="#d3d6da" stroke-width="0.9"/>
<path d="M607.3 50.0V48.2H609.0999999999999M616.9000000000001 48.2H618.7V50.0M618.7 56.7V58.5H616.9000000000001M609.0999999999999 58.5H607.3V56.7" fill="none" stroke="#e0e3e7" stroke-width="0.6"/>
<rect x="609" y="49.9" width="2.2" height="1.2" fill="#b3b6bb"/><rect x="609" y="53.8" width="2.2" height="1.2" fill="#b3b6bb"/>
<path d="M608 56.1h4.2l-2.1 2.3z" fill="#b3b6bb"/>
<path d="M612.3 50.5h2M615.2 50.5h1.8" stroke="#d3d6da" stroke-width="0.9"/>
<path d="M612.3 52.5h2M615.2 52.5h1.8" stroke="#d3d6da" stroke-width="0.9"/>
<path d="M612.3 54.4h2M615.2 54.4h1.8" stroke="#d3d6da" stroke-width="0.9"/>
<path d="M612.3 56.4h2M615.2 56.4h1.8" stroke="#d3d6da" stroke-width="0.9"/>
<path d="M750.4 32.6V29.7H753.3M769.1 29.7H772.0V32.6M772.0 47.9V50.8H769.1M753.3 50.8H750.4V47.9" fill="none" stroke="#cfdaeb" stroke-width="0.9"/>
<rect x="753" y="34.1" width="3.2" height="1.2" rx="0.5" fill="#8cc0e8"/>
<rect x="757.9" y="34.1" width="3.2" height="1.2" rx="0.5" fill="#8cc0e8"/>
<rect x="762.8" y="34.1" width="3.2" height="1.2" rx="0.5" fill="#8cc0e8"/>
<rect x="753" y="37.4" width="3.2" height="1.3" rx="0.5" fill="#9cc8ea"/>
<rect x="757.9" y="37.4" width="3.2" height="1.3" rx="0.5" fill="#0f6cbd"/>
<rect x="753" y="40.7" width="3.2" height="1.3" rx="0.5" fill="#9cc8ea"/>
<rect x="757.9" y="40.7" width="3.2" height="1.3" rx="0.5" fill="#0f6cbd"/>
<rect x="753" y="44" width="3.2" height="1.3" rx="0.5" fill="#9cc8ea"/>
<rect x="757.9" y="44" width="3.2" height="1.3" rx="0.5" fill="#0f6cbd"/>
<rect x="761.8" y="35" width="10.2" height="13.6" fill="#fff"/>
<path d="M764.8 42.3v-2.9a2 2.4 0 0 1 4 0v2.9" fill="#fff" stroke="#1368b3" stroke-width="1.4"/>
<rect x="762.6" y="41.9" width="8.5" height="5.9" rx="0.6" fill="url(#gb)"/>
<path d="M174.4 106.8h2.9M174.9 106.8v3.6M176.8 106.8v3.6M173.6 110.5h4.4M175.8 110.5v2.4" stroke="#5b5b55" stroke-width="0.8" fill="none"/>
<path d="M176.4 107v3.4" stroke="#5b5b55" stroke-width="1.1"/>
<circle cx="176.3" cy="123" r="3.1" fill="none" stroke="#949494" stroke-width="1.1"/><path d="M174.1 125.4L170.9 128.9" stroke="#949494" stroke-width="1.5"/>
<path d="M12.6 127.6v-6.2M10.8 123.2l1.8-1.9l1.8 1.9M18.6 121.4v6.2M16.8 125.8l1.8 1.9l1.8-1.9" stroke="#c3c6c9" stroke-width="0.95" fill="none"/>
<path d="M286.6 90l5 5M291.6 90l-5 5" stroke="#3c3c3c" stroke-width="1.05"/>
<path d="M10.3 137.8V136.0H12.100000000000001M19.099999999999998 136.0H20.9V137.8M20.9 145.59999999999997V147.39999999999998H19.099999999999998M12.100000000000001 147.39999999999998H10.3V145.59999999999997" fill="none" stroke="#dfe6f1" stroke-width="0.6"/>
<path d="M13.5 138.79999999999998v-0.5q0-1.1 1.1-1.1h1.8q1.1 0 1.1 1.1v0.5z" fill="#1368b3"/>
<rect x="12" y="139.0" width="7.2" height="7.4" fill="url(#gb)"/>
<path d="M13 140.6h1.6M15.6 140.6h1.7M15.6 142.39999999999998h1.7M13 144.1h1.6" stroke="#fff" stroke-width="0.9"/>
<path d="M18.1 139.79999999999998v6.3" stroke="#cfe3f5" stroke-width="0.7"/>
<path d="M10.3 154.3V152.5H12.100000000000001M19.099999999999998 152.5H20.9V154.3M20.9 162.09999999999997V163.89999999999998H19.099999999999998M12.100000000000001 163.89999999999998H10.3V162.09999999999997" fill="none" stroke="#dfe6f1" stroke-width="0.6"/>
<path d="M13.5 155.29999999999998v-0.5q0-1.1 1.1-1.1h1.8q1.1 0 1.1 1.1v0.5z" fill="#1368b3"/>
<rect x="12" y="155.5" width="7.2" height="7.4" fill="url(#gb)"/>
<path d="M13 157.1h1.6M15.6 157.1h1.7M15.6 158.89999999999998h1.7M13 160.6h1.6" stroke="#fff" stroke-width="0.9"/>
<path d="M18.1 156.29999999999998v6.3" stroke="#cfe3f5" stroke-width="0.7"/>
<path d="M10.3 170.8V169.0H12.100000000000001M19.099999999999998 169.0H20.9V170.8M20.9 178.59999999999997V180.39999999999998H19.099999999999998M12.100000000000001 180.39999999999998H10.3V178.59999999999997" fill="none" stroke="#dfe6f1" stroke-width="0.6"/>
<path d="M13.5 171.79999999999998v-0.5q0-1.1 1.1-1.1h1.8q1.1 0 1.1 1.1v0.5z" fill="#1368b3"/>
<rect x="12" y="172.0" width="7.2" height="7.4" fill="url(#gb)"/>
<path d="M13 173.6h1.6M15.6 173.6h1.7M15.6 175.39999999999998h1.7M13 177.1h1.6" stroke="#fff" stroke-width="0.9"/>
<path d="M18.1 172.79999999999998v6.3" stroke="#cfe3f5" stroke-width="0.7"/>
</svg>
</body></html>
